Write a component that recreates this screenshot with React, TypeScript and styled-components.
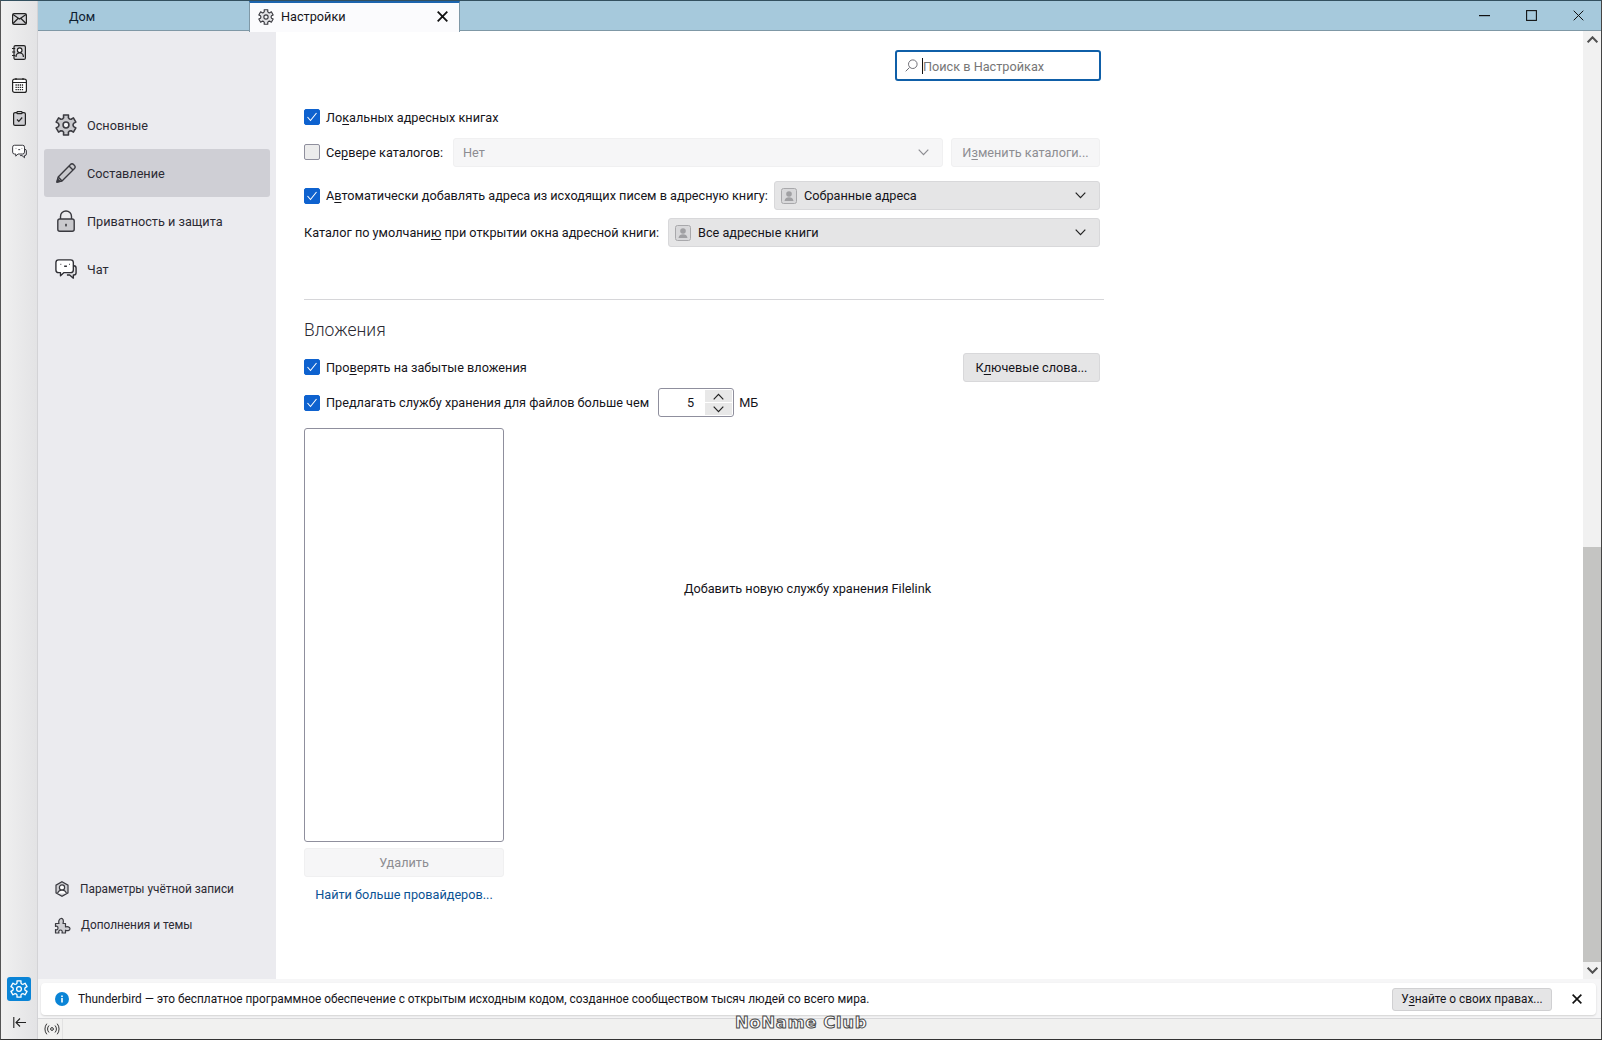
import React from 'react';
import styled, { createGlobalStyle } from 'styled-components';

const GlobalStyle = createGlobalStyle`
  html, body {
    margin: 0;
    padding: 0;
    background: #fff;
  }
  body {
    font-family: Roboto, "Noto Sans", "Liberation Sans", sans-serif;
    font-size: 12.7px;
    color: #15141a;
    overflow: hidden;
  }
`;

const Window = styled.div`
  width: 1602px;
  height: 1040px;
  display: grid;
  grid-template-columns: 37px 1fr;
  grid-template-rows: 1fr 20px;
  box-sizing: border-box;
  border-top: 1px solid #33505f;
  border-bottom: 1px solid #333;
  border-left: 1px solid #555;
  border-right: 1px solid #444;
  position: relative;
  overflow: hidden;
`;

const SpacesBar = styled.nav`
  grid-row: 1 / 3;
  background: linear-gradient(90deg, #f0f0f0, #e3e3e5);
  border-right: 1px solid #d3d3d6;
  display: flex;
  flex-direction: column;
  align-items: center;
  padding-top: 8px;
`;

const SpaceButton = styled.div`
  width: 20px;
  height: 20px;
  margin-bottom: 13px;
  display: flex;
  align-items: center;
  justify-content: center;
`;

const SpacesSpacer = styled.div`
  flex: 1;
`;

const SettingsSpace = styled.div`
  width: 24px;
  height: 24px;
  border-radius: 3px;
  background: #0a84d6;
  display: flex;
  align-items: center;
  justify-content: center;
  margin-bottom: 16px;
`;

const CollapseButton = styled.div`
  height: 10px;
  margin-bottom: 12px;
`;

const Main = styled.div`
  display: grid;
  grid-template-rows: 30px 1fr 40px;
  min-height: 0;
  background: #f0f0f4;
`;

const TabBar = styled.div`
  display: flex;
  background: #a6c9dc;
  border-bottom: 1px solid #7f98a6;
  height: 30px;
  box-sizing: border-box;
`;

const HomeTab = styled.div`
  width: 211px;
  padding-left: 31px;
  box-sizing: border-box;
  line-height: 31px;
  color: #0f2030;
`;

const ActiveTab = styled.div`
  width: 211px;
  height: 31px;
  box-sizing: border-box;
  background: #fbfbfd;
  border-top: 2px solid #1c64ae;
  border-left: 1px solid #7f98a6;
  border-right: 1px solid #7f98a6;
  display: flex;
  align-items: center;
  padding: 0 11px 2px 8px;
  gap: 7px;
  z-index: 1;
`;

const TabTitle = styled.span`
  flex: 1;
`;

const WindowButtons = styled.div`
  margin-left: auto;
  display: flex;
  align-items: center;
  gap: 36px;
  padding-right: 17px;
`;

const Body = styled.div`
  display: flex;
  min-height: 0;
`;

const Sidebar = styled.aside`
  width: 238px;
  flex: none;
  background: #ebebef;
  padding: 70px 6px 0 6px;
  box-sizing: border-box;
  display: flex;
  flex-direction: column;
`;

const Category = styled.div<{ $active?: boolean }>`
  height: 48px;
  border-radius: 3px;
  display: flex;
  align-items: center;
  gap: 10px;
  padding-left: 11px;
  background: ${(p) => (p.$active ? '#cfcfd5' : 'transparent')};
  color: #2b2a33;
`;

const SidebarSpacer = styled.div`
  flex: 1;
`;

const FooterLink = styled.div`
  height: 36px;
  display: flex;
  align-items: center;
  gap: 10px;
  padding-left: 10px;
  font-size: 11.85px;
  color: #2b2a33;
`;

const SidebarFooter = styled.div`
  padding-bottom: 36px;
`;

const Content = styled.main`
  flex: 1;
  display: flex;
  background: #fff;
  min-width: 0;
`;

const Pane = styled.div`
  flex: 1;
  padding: 19px 0 0 28px;
  box-sizing: border-box;
`;

const Column = styled.div`
  width: 800px;
`;

const SearchRow = styled.div`
  display: flex;
  justify-content: flex-end;
  padding-right: 3px;
  height: 50px;
`;

const SearchBox = styled.div`
  width: 206px;
  height: 31px;
  box-sizing: border-box;
  border: 2px solid #0f5fa8;
  border-radius: 3px;
  display: flex;
  align-items: center;
  gap: 4px;
  padding-left: 8px;
  color: #767676;
`;

const SearchText = styled.span`
  margin-top: 2px;
`;

const Caret = styled.span`
  width: 1px;
  height: 16px;
  background: #111;
  margin-right: -4px;
`;

const Row = styled.div<{ $h: number; $top?: number }>`
  height: ${(p) => p.$h}px;
  margin-top: ${(p) => p.$top ?? 0}px;
  display: flex;
  align-items: center;
  padding-right: 4px;
  white-space: nowrap;
`;

const CheckBox = styled.span<{ $checked?: boolean }>`
  width: 16px;
  height: 16px;
  flex: none;
  box-sizing: border-box;
  border-radius: 2px;
  margin-right: 6px;
  display: flex;
  align-items: center;
  justify-content: center;
  background: ${(p) => (p.$checked ? '#0e62cf' : '#ececec')};
  border: 1px solid ${(p) => (p.$checked ? '#0e62cf' : '#8f8f9d')};
`;

const Key = styled.span`
  text-decoration: underline;
  text-underline-offset: 2px;
`;

const Controls = styled.div`
  margin-left: auto;
  display: flex;
  gap: 8px;
`;

const Select = styled.div<{ $w: number; $disabled?: boolean }>`
  width: ${(p) => p.$w}px;
  height: 29px;
  flex: none;
  box-sizing: border-box;
  border-radius: 3px;
  display: flex;
  align-items: center;
  padding: ${(p) => (p.$disabled ? '0 13px 0 9px' : '0 13px 0 6px')};
  gap: 7px;
  background: ${(p) => (p.$disabled ? '#f6f6f7' : '#e5e5e6')};
  border: 1px solid ${(p) => (p.$disabled ? '#f0f0f1' : '#d8d8da')};
  color: ${(p) => (p.$disabled ? '#8d8d92' : '#15141a')};
`;

const SelectLabel = styled.span`
  flex: 1;
`;

const Button = styled.div<{ $w: number; $disabled?: boolean }>`
  width: ${(p) => p.$w}px;
  height: 29px;
  flex: none;
  box-sizing: border-box;
  border-radius: 3px;
  display: flex;
  align-items: center;
  justify-content: center;
  white-space: pre;
  background: ${(p) => (p.$disabled ? '#f6f6f7' : '#e5e5e6')};
  border: 1px solid ${(p) => (p.$disabled ? '#f0f0f1' : '#d8d8da')};
  color: ${(p) => (p.$disabled ? '#8d8d92' : '#15141a')};
`;

const Divider = styled.hr`
  border: 0;
  border-top: 1px solid #d6d6d9;
  margin: 51px 0 0;
  width: 800px;
`;

const SectionTitle = styled.h2`
  margin: 18px 0 7px;
  font-size: 17.5px;
  line-height: 24px;
  font-weight: 300;
  color: #2b2a33;
`;

const Spinner = styled.div`
  width: 76px;
  height: 29px;
  box-sizing: border-box;
  border: 1px solid #8f8f9d;
  border-radius: 3px;
  margin: 0 5px 0 9px;
  display: flex;
  align-items: center;
`;

const SpinnerValue = styled.span`
  flex: 1;
  text-align: right;
  padding-right: 11px;
`;

const SpinnerArrows = styled.div`
  width: 27px;
  height: 25px;
  margin-right: 1px;
  display: grid;
  grid-template-rows: 1fr 1fr;
  gap: 1px;
`;

const SpinnerArrow = styled.div`
  background: #e8e8e8;
  display: flex;
  align-items: center;
  justify-content: center;
`;

const FilelinkArea = styled.div`
  display: flex;
  margin-top: 8px;
`;

const ProviderColumn = styled.div`
  width: 200px;
  flex: none;
  display: flex;
  flex-direction: column;
`;

const ProviderList = styled.div`
  height: 414px;
  box-sizing: border-box;
  border: 1px solid #8f8f9d;
  border-radius: 3px;
  margin-bottom: 6px;
`;

const ProviderLink = styled.a`
  margin-top: 6px;
  text-align: center;
  color: #0b5394;
  line-height: 24px;
`;

const ProviderHint = styled.div`
  flex: 1;
  height: 320px;
  display: flex;
  align-items: center;
  justify-content: center;
  padding-left: 7px;
`;

const Scrollbar = styled.div`
  width: 18px;
  flex: none;
  background: #f1f1f1;
  display: flex;
  flex-direction: column;
  align-items: center;
`;

const ScrollArrow = styled.div`
  height: 17px;
  display: flex;
  align-items: center;
`;

const ScrollTrack = styled.div`
  flex: 1;
  width: 100%;
  display: flex;
  flex-direction: column;
  justify-content: flex-end;
`;

const ScrollThumb = styled.div`
  height: 415px;
  background: #c4c4c2;
`;

const NotificationWrap = styled.div`
  padding: 4px 5px 0 3px;
  background: #f6f6f7;
  border-bottom: 1px solid #d8d8da;
  box-sizing: border-box;
`;

const Notification = styled.div`
  height: 32px;
  background: #fff;
  border-radius: 4px;
  box-shadow: 0 1px 2px rgba(0, 0, 0, 0.15);
  display: flex;
  align-items: center;
  font-size: 11.85px;
  white-space: nowrap;
  padding-left: 14px;
`;

const NotificationText = styled.span`
  margin-left: 9px;
`;

const NotificationButton = styled.div`
  margin-left: auto;
  width: 160px;
  height: 23px;
  box-sizing: border-box;
  background: #e5e5e6;
  border: 1px solid #d0d0d2;
  border-radius: 3px;
  display: flex;
  align-items: center;
  justify-content: center;
  white-space: pre;
`;

const CloseNote = styled.div`
  width: 44px;
  padding-left: 6px;
  box-sizing: border-box;
  display: flex;
  justify-content: center;
`;

const StatusBar = styled.footer`
  background: #f1f1f0;
  display: flex;
  align-items: center;
`;

const StatusCell = styled.div`
  height: 100%;
  padding: 0 2px 0 6px;
  display: flex;
  align-items: center;
  border-right: 1px solid #e2e2e2;
`;

const Watermark = styled.div`
  position: absolute;
  left: 0;
  right: 0;
  bottom: 6px;
  text-align: center;
  font-family: "DejaVu Sans", sans-serif;
  font-size: 16.5px;
  font-weight: 700;
  line-height: 20px;
  color: #fff;
  -webkit-text-stroke: 1px #4a4a4a;
  letter-spacing: 0.6px;
`;

const Svg = styled.svg`
  display: block;
  flex: none;
`;

// six lobed gear outline, centred on 12,12
const gearPath = () => {
  const pt = (r: number, deg: number) => {
    const a = ((deg - 90) * Math.PI) / 180;
    return `${(12 + r * Math.cos(a)).toFixed(2)} ${(12 + r * Math.sin(a)).toFixed(2)}`;
  };
  let d = '';
  for (let i = 0; i < 6; i++) {
    const c = i * 60;
    d += `${i === 0 ? 'M' : 'L'}${pt(7.6, c - 30)} L${pt(8.4, c - 18)} L${pt(11.2, c - 14)} L${pt(11.2, c + 14)} L${pt(8.4, c + 18)} `;
  }
  return `${d}Z`;
};

const GEAR = gearPath();

type GearProps = { size?: number; fill?: string; stroke?: string; hole?: string };

const Gear = ({ size = 22, fill = '#c9c9cd', stroke = '#3a3a40', hole = '#f4f4f6' }: GearProps) => (
  <Svg width={size} height={size} viewBox="0 0 24 24" fill={fill} stroke={stroke} strokeWidth="1.700" strokeLinejoin="round">
    <path d={GEAR} />
    <circle cx="12" cy="12" r="3.200" fill={hole} />
  </Svg>
);

const Pencil = () => (
  <Svg width={22} height={22} viewBox="0 0 22 22" fill="#c9c9cd" stroke="#3a3a40" strokeWidth="1.400" strokeLinejoin="round">
    <path d="M2 20l1.200-5L15.500 2.500a2 2 0 0 1 3 0l1 1a2 2 0 0 1 0 3L7 19z" />
    <path d="M3.200 15L7 19M14 4l4 4" fill="none" />
    <path d="M2 20l.7-2.800 2.100 2.100z" fill="#3a3a40" />
  </Svg>
);

const Lock = () => (
  <Svg width={22} height={22} viewBox="0 0 22 22" fill="none" stroke="#3a3a40" strokeWidth="1.400">
    <path d="M5.500 9V6.500a5.500 5.500 0 0 1 11 0V9" />
    <rect x="2.800" y="9" width="16.400" height="12.200" rx="2" fill="#c9c9cd" />
    <rect x="10.200" y="13.800" width="1.600" height="2.600" fill="#3a3a40" stroke="none" />
  </Svg>
);

const Chat = ({ size = 22 }: { size?: number }) => (
  <Svg width={size} height={size} viewBox="0 0 24 24" fill="none" stroke="#2f2f35" strokeWidth="1.500" strokeLinejoin="round">
    <path d="M19 8.500h1.500A2.500 2.500 0 0 1 23 11v5a2.500 2.500 0 0 1-2.500 2.500H20V22l-4-3.500h-3" fill="#e3e3e6" />
    <path d="M4 2h13a3 3 0 0 1 3 3v8a3 3 0 0 1-3 3H9.500L6 19.500V16H4a3 3 0 0 1-3-3V5a3 3 0 0 1 3-3z" fill="#fff" />
    <path d="M6 7h.8M10 9h3M15.500 7h.8" />
  </Svg>
);

const Mail = () => (
  <Svg width={15} height={12} viewBox="0 0 15 12" fill="#d5d5d8" stroke="#222" strokeWidth="1.200">
    <rect x=".6" y=".6" width="13.800" height="10.800" rx="1.500" />
    <path d="M1 1.500l6.500 4.500L14 1.500M1 10.500l5-5M14 10.500l-5-5" fill="none" />
  </Svg>
);

const AddressBook = () => (
  <Svg width={14} height={15} viewBox="0 0 14 15" fill="none" stroke="#222" strokeWidth="1.200">
    <rect x="2" y=".6" width="11.400" height="13.800" rx="1.500" fill="#d5d5d8" />
    <circle cx="7.700" cy="5.200" r="2.300" fill="#fff" />
    <path d="M4 12c0-2.500 1.500-4 3.700-4s3.700 1.500 3.700 4M0 3.500h3.200M0 7h3.200M0 10.500h3.200" />
  </Svg>
);

const Calendar = () => (
  <Svg width={15} height={15} viewBox="0 0 15 15" fill="none" stroke="#222" strokeWidth="1.200">
    <rect x=".6" y="1.100" width="13.800" height="13.300" rx="2" fill="#fff" />
    <path d="M1 4.500h13M4 0v2M11 0v2" />
    <path d="M3.500 7h8M3.500 9.300h8M3.500 11.600h8" strokeDasharray="1.300 .8" strokeWidth="1.300" />
  </Svg>
);

const Tasks = () => (
  <Svg width={13} height={15} viewBox="0 0 13 15" fill="#cfcfd3" stroke="#222" strokeWidth="1.200">
    <rect x=".6" y="1.600" width="11.800" height="12.800" rx="1.500" />
    <rect x="4" y=".6" width="5" height="2" rx=".6" fill="#fff" />
    <path d="M4 8.500l1.800 1.800L9.200 6.500" fill="none" />
  </Svg>
);

const AccountIcon = () => (
  <Svg width={16} height={16} viewBox="0 0 16 16" fill="none" stroke="#3a3a40" strokeWidth="1.200">
    <path d="M8 .8l6 3.300v7.800l-6 3.300-6-3.300V4.100z" fill="#cfcfd3" />
    <circle cx="8" cy="6.500" r="2.600" fill="#fff" />
    <path d="M3.500 12.500c.6-2.200 2.400-3.400 4.500-3.400s3.900 1.200 4.500 3.400" fill="#fff" />
  </Svg>
);

const Puzzle = () => (
  <Svg width={17} height={17} viewBox="0 0 17 17" fill="#cfcfd3" stroke="#3a3a40" strokeWidth="1.200" strokeLinejoin="round">
    <path d="M1.500 6.500H5C4.200 4.500 5 2 7 1.500c2-.3 3 2 2 5h2.500V10c1.500-.7 4.500-.3 4.500 1.800S13 14 11.500 13.200V16H8c.7-1.500 0-3-1.500-3S4.300 14.500 5 16H1.500v-3.500C3 13.200 4 12.500 4 11S3 8.800 1.500 9.500z" />
  </Svg>
);

const Check = () => (
  <Svg width={12} height={12} viewBox="0 0 12 12" fill="none" stroke="#fff" strokeWidth="1.100">
    <path d="M1.500 6l3 3.500L10.500 2" />
  </Svg>
);

const Chevron = ({ color = '#222', up, width = 1.200 }: { color?: string; up?: boolean; width?: number }) => (
  <Svg width={11} height={7} viewBox="0 0 11 7" fill="none" stroke={color} strokeWidth={width}>
    <path d={up ? 'M.7 6.300l4.800-5 4.800 5' : 'M.7.700l4.800 5 4.800-5'} />
  </Svg>
);

const BookBadge = () => (
  <Svg width={16} height={16} viewBox="0 0 16 16" fill="#c8c8ca" stroke="#a8a8ab" strokeWidth="1">
    <rect x=".5" y=".5" width="15" height="15" rx="2" fill="#d8d8da" />
    <circle cx="8" cy="6" r="2.800" stroke="none" fill="#a0a0a3" />
    <path d="M3.500 13c.4-2.800 2.300-3.800 4.500-3.800s4.100 1 4.500 3.800z" stroke="none" fill="#a0a0a3" />
  </Svg>
);

const Search = () => (
  <Svg width={13} height={13} viewBox="0 0 13 13" fill="none" stroke="#6f6f76" strokeWidth="1">
    <circle cx="7.800" cy="5.200" r="4.300" />
    <path d="M4.500 8.500L.7 12.300" />
  </Svg>
);

const Cross = ({ size = 11, width = 1.800 }: { size?: number; width?: number }) => (
  <Svg width={size} height={size} viewBox="0 0 11 11" fill="none" stroke="#111" strokeWidth={width}>
    <path d="M.7.700l9.600 9.600M10.300.700L.7 10.300" />
  </Svg>
);

const InfoIcon = () => (
  <Svg width={14} height={14} viewBox="0 0 14 14">
    <circle cx="7" cy="7" r="7" fill="#0a84d6" />
    <rect x="6.200" y="6" width="1.600" height="4.500" fill="#fff" />
    <rect x="6.200" y="3.500" width="1.600" height="1.600" fill="#fff" />
  </Svg>
);

const Collapse = () => (
  <Svg width={13} height={11} viewBox="0 0 13 11" fill="none" stroke="#222" strokeWidth="1.100">
    <path d="M.8 0v11M13 5.500H3M7 1.500l-4 4 4 4" />
  </Svg>
);

const Radio = () => (
  <Svg width={16} height={12} viewBox="0 0 16 12" fill="none" stroke="#333" strokeWidth="1">
    <circle cx="8" cy="6" r="1.400" />
    <path d="M5 2.500a5 5 0 0 0 0 7M11 2.500a5 5 0 0 1 0 7M2.800.7a8.500 8.500 0 0 0 0 10.600M13.200.7a8.500 8.500 0 0 1 0 10.600" />
  </Svg>
);

function App() {
  return (
    <Window>
      <GlobalStyle />
      <SpacesBar>
        <SpaceButton><Mail /></SpaceButton>
        <SpaceButton><AddressBook /></SpaceButton>
        <SpaceButton><Calendar /></SpaceButton>
        <SpaceButton><Tasks /></SpaceButton>
        <SpaceButton><Chat size={15} /></SpaceButton>
        <SpacesSpacer />
        <SettingsSpace><Gear size={18} fill="none" stroke="#fff" hole="none" /></SettingsSpace>
        <CollapseButton><Collapse /></CollapseButton>
      </SpacesBar>

      <Main>
        <TabBar>
          <HomeTab>Дом</HomeTab>
          <ActiveTab>
            <Gear size={16} fill="#e3e3e6" />
            <TabTitle>Настройки</TabTitle>
            <Cross />
          </ActiveTab>
          <WindowButtons>
            <Svg width={11} height={2} viewBox="0 0 11 2"><rect width="11" height="1.200" fill="#111" /></Svg>
            <Svg width={11} height={11} viewBox="0 0 11 11" fill="none" stroke="#111" strokeWidth="1.100"><rect x=".6" y=".6" width="9.800" height="9.800" /></Svg>
            <Cross size={11} width={1} />
          </WindowButtons>
        </TabBar>

        <Body>
          <Sidebar>
            <Category><Gear /><span>Основные</span></Category>
            <Category $active><Pencil /><span>Составление</span></Category>
            <Category><Lock /><span>Приватность и защита</span></Category>
            <Category><Chat /><span>Чат</span></Category>
            <SidebarSpacer />
            <SidebarFooter>
              <FooterLink><AccountIcon /><span>Параметры учётной записи</span></FooterLink>
              <FooterLink><Puzzle /><span>Дополнения и темы</span></FooterLink>
            </SidebarFooter>
          </Sidebar>

          <Content>
            <Pane>
              <Column>
                <SearchRow>
                  <SearchBox><Search /><Caret /><SearchText>Поиск в Настройках</SearchText></SearchBox>
                </SearchRow>
                <Row $h={34}>
                  <CheckBox $checked><Check /></CheckBox>
                  <span>Ло<Key>к</Key>альных адресных книгах</span>
                </Row>
                <Row $h={32} $top={2}>
                  <CheckBox />
                  <span>Се<Key>р</Key>вере каталогов:</span>
                  <Controls>
                    <Select $w={490} $disabled>
                      <SelectLabel>Нет</SelectLabel>
                      <Chevron color="#8d8d92" />
                    </Select>
                    <Button $w={149} $disabled>И<Key>з</Key>менить каталоги...</Button>
                  </Controls>
                </Row>
                <Row $h={43} $top={6}>
                  <CheckBox $checked><Check /></CheckBox>
                  <span>А<Key>в</Key>томатически добавлять адреса из исходящих писем в адресную книгу:</span>
                  <Controls>
                    <Select $w={326}>
                      <BookBadge />
                      <SelectLabel>Собранные адреса</SelectLabel>
                      <Chevron />
                    </Select>
                  </Controls>
                </Row>
                <Row $h={31}>
                  <span>Каталог по умолчани<Key>ю</Key> при открытии окна адресной книги:</span>
                  <Controls>
                    <Select $w={432}>
                      <BookBadge />
                      <SelectLabel>Все адресные книги</SelectLabel>
                      <Chevron />
                    </Select>
                  </Controls>
                </Row>
                <Divider />
                <SectionTitle>Вложения</SectionTitle>
                <Row $h={36}>
                  <CheckBox $checked><Check /></CheckBox>
                  <span>Про<Key>в</Key>ерять на забытые вложения</span>
                  <Controls>
                    <Button $w={137}>К<Key>л</Key>ючевые слова...</Button>
                  </Controls>
                </Row>
                <Row $h={35}>
                  <CheckBox $checked><Check /></CheckBox>
                  <span>Предлагать службу хранения для файлов больше чем</span>
                  <Spinner>
                    <SpinnerValue>5</SpinnerValue>
                    <SpinnerArrows>
                      <SpinnerArrow><Chevron up /></SpinnerArrow>
                      <SpinnerArrow><Chevron /></SpinnerArrow>
                    </SpinnerArrows>
                  </Spinner>
                  <span>МБ</span>
                </Row>
                <FilelinkArea>
                  <ProviderColumn>
                    <ProviderList />
                    <Button $w={200} $disabled>Удалить</Button>
                    <ProviderLink>Найти больше провайдеров...</ProviderLink>
                  </ProviderColumn>
                  <ProviderHint>Добавить новую службу хранения Filelink</ProviderHint>
                </FilelinkArea>
              </Column>
            </Pane>
            <Scrollbar>
              <ScrollArrow><Chevron up color="#505050" width={2} /></ScrollArrow>
              <ScrollTrack><ScrollThumb /></ScrollTrack>
              <ScrollArrow><Chevron color="#505050" width={2} /></ScrollArrow>
            </Scrollbar>
          </Content>
        </Body>

        <NotificationWrap>
          <Notification>
            <InfoIcon />
            <NotificationText>Thunderbird — это бесплатное программное обеспечение с открытым исходным кодом, созданное сообществом тысяч людей со всего мира.</NotificationText>
            <NotificationButton>У<Key>з</Key>найте о своих правах...</NotificationButton>
            <CloseNote><Cross size={10} /></CloseNote>
          </Notification>
        </NotificationWrap>
      </Main>

      <StatusBar>
        <StatusCell><Radio /></StatusCell>
      </StatusBar>
      <Watermark>NoName Club</Watermark>
    </Window>
  );
}

export default App;
